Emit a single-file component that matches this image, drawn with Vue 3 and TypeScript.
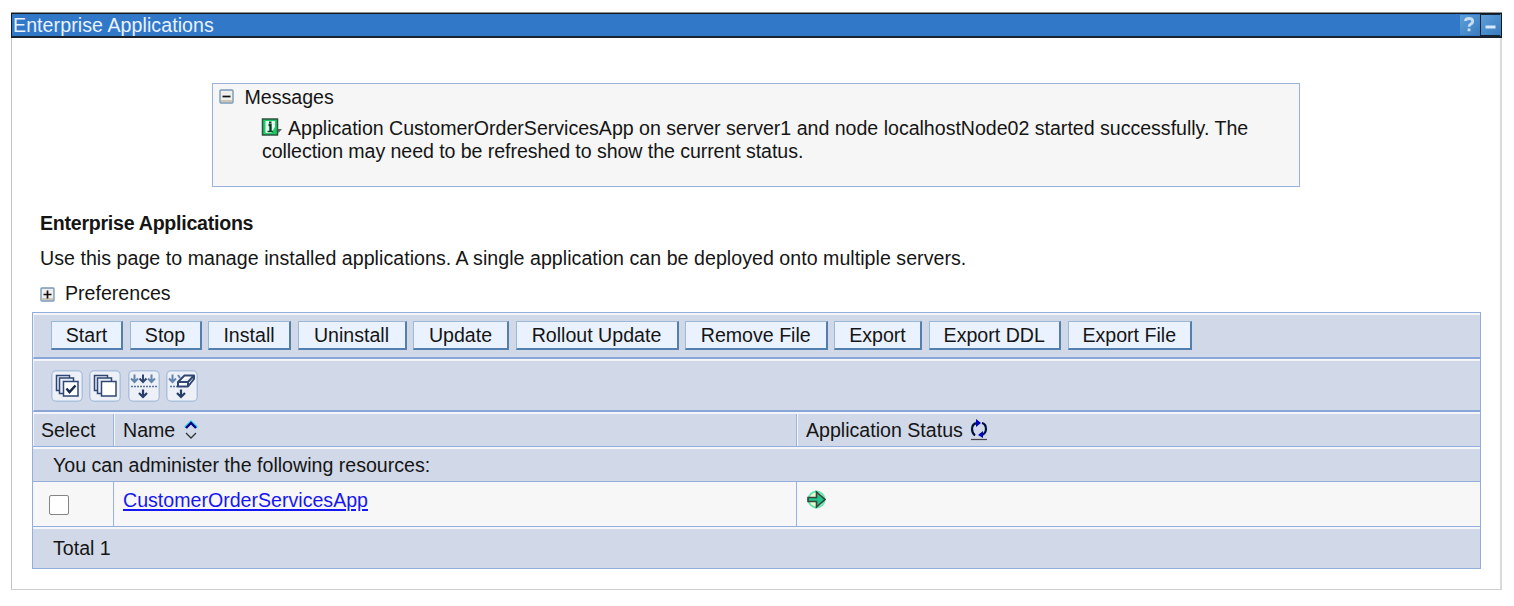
<script setup lang="ts">
interface ActionButton {
  label: string
  width: number
}

const actions: ActionButton[] = [
  { label: 'Start', width: 72 },
  { label: 'Stop', width: 72 },
  { label: 'Install', width: 83 },
  { label: 'Uninstall', width: 109 },
  { label: 'Update', width: 96 },
  { label: 'Rollout Update', width: 163 },
  { label: 'Remove File', width: 142.5 },
  { label: 'Export', width: 88 },
  { label: 'Export DDL', width: 132.5 },
  { label: 'Export File', width: 124.5 },
]
const tools = ['select-all', 'deselect-all', 'show-filter', 'clear-filter']
</script>

<template>
  <main class="portlet">
    <header class="title-bar">
      <h1>Enterprise Applications</h1>
      <span class="title-button help">
        <svg width="19" height="21" viewBox="0 0 19 21"><path d="M5.5 7Q5.5 4.5 9 4.5T12.7 7.2Q12.7 9 10.9 9.9T9 12.7M9 14.5V17.2" fill="none" stroke="#c7def4" stroke-width="2.8"/></svg>
      </span>
      <span class="title-button">
        <svg width="19" height="21" viewBox="0 0 19 21"><path d="M4.5 13H14.5" stroke="#d5e8fa" stroke-width="3"/></svg>
      </span>
    </header>

    <section class="messages">
      <div class="message-title">
        <svg class="toggle" width="15" height="15" viewBox="0 0 15 15"><rect x="1" y="1" width="13" height="13" rx="1" fill="#f0efeb" stroke="#7899b8" stroke-width="1.4"/><path d="M2 11H13V13H2Z" fill="#cdc5b6"/><path d="M3.5 7.5H11.5" stroke="#111" stroke-width="1.7"/></svg>
        <span>Messages</span>
      </div>
      <p><svg class="info" width="21" height="18" viewBox="0 0 21 18"><rect x="1.5" y="1" width="15" height="16" fill="#17ce63" stroke="#305241" stroke-width="1.5"/><path d="M4.5 3H14V9L10.5 15H4.5Z" fill="#e5fff0"/><path d="M7.5 7H9.5V14" fill="none" stroke="#063f20" stroke-width="2.4"/><path d="M6.5 13.5H12" stroke="#063f20" stroke-width="1.5"/><path d="M8 3.5H10.5V5.5H8Z" fill="#063f20"/><path d="M16.5 11H21L17.5 15Z" fill="#616161"/></svg><span class="m1">Application CustomerOrderServicesApp on server server1 and node localhostNode02 started successfully. The</span><br><span class="m2">collection may need to be refreshed to show the current status.</span></p>
    </section>

    <h2><span>Enterprise Applications</span></h2>
    <p class="description"><span>Use this page to manage installed applications. A single application can be deployed onto multiple servers.</span></p>
    <div class="preferences">
      <svg class="toggle" width="15" height="15" viewBox="0 0 15 15"><rect x="1" y="1" width="13" height="13" rx="1" fill="#f0efeb" stroke="#7899b8" stroke-width="1.4"/><path d="M2 11H13V13H2Z" fill="#cdc5b6"/><path d="M3.5 7.5H11.5M7.5 3.5V11.5" stroke="#111" stroke-width="1.7"/></svg>
      <span>Preferences</span>
    </div>

    <section class="resources">
      <div class="actions">
        <button v-for="action in actions" :key="action.label" :style="{ width: action.width + 'px' }">{{ action.label }}</button>
      </div>
      <div class="tools">
        <span v-for="tool in tools" :key="tool" class="tool">
          <svg width="32" height="32" viewBox="0 0 32 32" fill="none" stroke="#304773" stroke-width="1.5">
            <template v-if="tool === 'select-all' || tool === 'deselect-all'">
              <path fill="#e7ecf6" d="M5.5 5.5H18.5V20.5H5.5Z"/><path fill="#e7ecf6" d="M8.5 8H22.5V23.5H8.5Z"/><path fill="#fff" d="M12.5 11.5H27V26H12.5Z"/>
              <path v-if="tool === 'select-all'" d="M15.5 18.5L18.5 22L24.5 15.5" stroke="#172b4d" stroke-width="2.5"/>
            </template>
            <template v-else>
              <path v-if="tool === 'show-filter'" d="M6.5 4.5V12M3 8.5L6.5 12L10 8.5M23.5 4.5V12M20 8.5L23.5 12L27 8.5" stroke="#6485ad" stroke-width="2"/>
              <path v-else d="M6.5 4.5V12M3 8.5L6.5 12L10 8.5M12 5L14 8" stroke="#6485ad" stroke-width="2"/>
              <path v-if="tool === 'show-filter'" d="M15 4.5V12M11.5 8.5L15 12L18.5 8.5" stroke-width="2"/>
              <path :d="tool === 'show-filter' ? 'M3 16.5H29' : 'M4 16.5H12'" stroke-width="1.7" stroke-dasharray="2 1" stroke="#58759e"/>
              <path d="M15 19.5V26.5M11 23L15 27L19 23" stroke-width="2.2" stroke="#253d68"/>
              <path v-if="tool === 'clear-filter'" fill="#fff" stroke-width="2" stroke-linejoin="round" d="M12 12L18.5 5.5H28V9L22 16.5H12ZM12 12H22L28 5.5M22 12V16.5"/>
            </template>
          </svg>
        </span>
      </div>
      <div class="table-row heading">
        <div class="cell select"><span>Select</span></div>
        <div class="cell name"><span>Name</span><svg width="14" height="20" viewBox="0 0 14 20" fill="none"><path d="M1 7.5L7 2L13 7.5" stroke="#38d9e6" stroke-width="3"/><path d="M2 8L7 3L12 8" stroke="#080086" stroke-width="2.3"/><path d="M2 13L7 18L12 13" stroke="#333" stroke-width="1.3"/></svg></div>
        <div class="cell status"><span>Application Status</span><svg width="18" height="22" viewBox="0 0 18 22" fill="none"><path d="M6 3.5Q2 5 2 10Q2 14 4.5 16M12 4Q16 5 16 10Q16 14 13 16" stroke="#7cc4cc" stroke-width="2.6"/><path d="M7 4Q2 5 2 10Q2 14 5 16.5M12 4Q16 5 16 10Q16 14 12 16" stroke="#08083d" stroke-width="2"/><path d="M6 0L11 4L6 8ZM13 12L8 16L13 19Z" fill="#0000c0"/><path d="M1 20.5H17" stroke="#444" stroke-width="1.2"/></svg></div>
      </div>
      <div class="group-row"><span>You can administer the following resources:</span></div>
      <div class="table-row resource">
        <div class="cell select"><input type="checkbox" aria-label="CustomerOrderServicesApp"></div>
        <div class="cell name"><a href="#">CustomerOrderServicesApp</a></div>
        <div class="cell status"><svg width="19" height="19" viewBox="0 0 19 19"><circle cx="9.5" cy="9.5" r="8" fill="#eefacb" stroke="#62e7b0" stroke-width="2"/><path d="M1 7.5H9.5V2L18 9.5L9.5 17V11.5H1Z" fill="#20c38b" stroke="#34453b" stroke-width="1.6"/></svg></div>
      </div>
      <div class="total-row"><span>Total 1</span></div>
    </section>
  </main>
</template>

<style>
body { margin: 0; background: #fff; }
</style>
<style scoped>
* { box-sizing: border-box; }
.portlet { margin: 13px 0 0 11px; width: 1491px; height: 577px; border: 1px solid #cfcfcf; border-left-color: #c4c4c4; border-right: 2px solid #dadada; border-top: 0; font: 19.6px/22px "Liberation Sans", Arial, sans-serif; color: #151515; }
.title-bar { display: flex; height: 25px; margin: 0 -2px 0 -1px; border: 1px solid #101820; border-bottom: 2px solid #18222e; box-shadow: 0 -1px #929292; background: #3178c8; padding-left: 1px; }
h1 { font-size: 19.6px; font-weight: 400; line-height: 22px; margin: 0 auto 0 0; letter-spacing: .07px; color: #e9f2ff; }
.title-button { width: 20px; height: 20px; margin-top: 1px; background: linear-gradient(135deg, #5e9fd9, #397cbf); }
.title-button.help { width: 20px; margin-right: 1px; }
.title-button + .title-button { box-shadow: -1px 0 #152536, -1px -1px #152536, -1px 1px #152536; }
.title-button svg { display: block; margin-top: -1px; }
.messages { width: 1088px; height: 104px; margin: 45px 0 0 200px; border: 1px solid #9bb1da; background: #f6f6f6; }
.message-title { display: flex; height: 26px; align-items: center; padding-left: 6px; gap: 10.5px; }
.message-title .toggle { margin-top: -1px; }
.toggle { flex: none; }
.messages p { margin: 7px 0 0 48px; line-height: 23px; white-space: nowrap; }
.info { margin-right: 6px; vertical-align: -1px; }
.m1 { letter-spacing: -.018px; }
.m2 { letter-spacing: -.07px; margin-left: 1px; }
h2 { font-size: 19.6px; line-height: 22px; margin: 25px 0 0 28px; letter-spacing: -.26px; }
.description { margin: 13px 0 0 28px; letter-spacing: .035px; }
.preferences { display: flex; align-items: center; margin: 12px 0 0 28px; gap: 10px; height: 23px; }
.preferences .toggle { margin-top: 3px; }
.resources { width: 1449px; height: 257px; margin: 8px 0 0 20px; border: 1px solid #93addd; background: #d1d8e7; }
.actions { display: flex; height: 46px; gap: 6.5px; padding: 6px 0 0 17px; border-top: 2px solid #f4f5f8; border-bottom: 2px solid #8aa6d8; border-left: 1px solid #edf0f6; }
button { height: 29px; padding: 0; border: 1px solid #9bb9d6; border-right: 2px solid #527fae; border-bottom: 2px solid #527fae; background: #eaf2ff; color: #151515; font: inherit; white-space: nowrap; flex: none; }
.tools { display: flex; height: 53px; border-top: 2px solid #f4f5f8; border-bottom: 2px solid #8aa6d8; border-left: 1px solid #edf0f6; padding: 9px 0 0 17px; gap: 6.4px; }
.tool { width: 32px; height: 32px; border-radius: 5px; background: #edf0f6; box-shadow: inset 0 0 0 1.5px #acc1dd; }
.tool svg { display: block; }
.table-row { display: grid; grid-template-columns: 80px 683px 1fr; }
.cell { border-left: 1px solid #9bb3df; box-shadow: inset 1px 0 #f3f5fa; }
.cell.select { border-left: 0; }
.heading { height: 35px; border-top: 2px solid #f3f5fa; border-bottom: 1px solid #93addd; }
.heading .cell { display: flex; align-items: center; gap: 9px; padding: 0 0 1px 9px; }
.heading .cell.select { padding-left: 8px; }
.heading .cell.status { gap: 7px; }
.group-row { height: 35px; padding: 5px 0 0 20px; border-top: 2px solid #f5f6f9; border-bottom: 1px solid #93addd; }
.resource { height: 45px; background: #f7f7f7; border-bottom: 1px solid #93addd; }
.resource .name { padding: 7px 0 0 9px; }
.resource .status { padding: 8px 0 0 10px; }
.resource .select { padding: 13px 0 0 16px; }
input { display: block; appearance: none; width: 20px; height: 20px; margin: 0; border: 1.7px solid #858585; border-radius: 2px; background: #fff; }
a { color: #1717f5; text-decoration-thickness: 1.5px; text-underline-offset: 2px; }
.total-row { height: 41px; padding: 8px 0 0 20px; border-top: 2px solid #f5f6f9; }
</style>
